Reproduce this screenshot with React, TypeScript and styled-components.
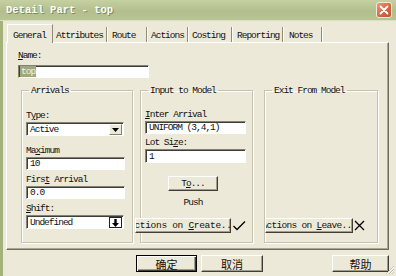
import React from 'react';
import styled, { createGlobalStyle, css } from 'styled-components';

const Global = createGlobalStyle`
  html, body { margin: 0; padding: 0; background: #ece9d8; }
  body { width: 396px; height: 276px; overflow: hidden; }
`;

const mono = `"Liberation Mono", "Courier New", monospace`;
const cjk = `"Noto Sans CJK SC", "Noto Sans", sans-serif`;

const Window = styled.div`
  position: relative;
  width: 396px;
  height: 276px;
  display: flex;
  flex-direction: column;
  background: #ece9d8;
  overflow: hidden;
  font-family: ${mono};
  font-size: 9.5px;
  letter-spacing: -1px;
  color: #111;
`;

const TitleBar = styled.div`
  height: 21px;
  flex: none;
  display: flex;
  align-items: center;
  justify-content: space-between;
  padding: 0 4px 0 6px;
  box-sizing: border-box;
  background: linear-gradient(#c6d0a2, #b2bf8d 55%, #b8c493);
  border-bottom: 1px solid #d9dfc4;
`;

const Title = styled.span`
  font-family: ${mono};
  font-weight: bold;
  font-size: 10.5px;
  letter-spacing: 0;
  color: #fbfcf6;
  text-shadow: 1px 1px 0 #7f8a63;
`;

const CloseBox = styled.div`
  width: 16px;
  height: 16px;
  box-sizing: border-box;
  border: 1px solid #f3e8df;
  border-radius: 3px;
  background: linear-gradient(135deg, #e99a7a, #d2643f 60%, #c4542f);
  display: flex;
  align-items: center;
  justify-content: center;
`;

const Body = styled.div`
  flex: 1;
  display: flex;
  flex-direction: column;
  border-left: 3px solid #a3b27b;
  padding: 3px 0 0 3px;
`;

const TabStrip = styled.div`
  display: flex;
  align-items: flex-end;
  height: 18px;
  padding-left: 1px;
`;

const Tab = styled.div<{ $w: number; $pad: number; $active?: boolean }>`
  width: ${p => p.$w}px;
  box-sizing: border-box;
  padding-left: ${p => p.$pad}px;
  line-height: 13px;
  white-space: nowrap;
  ${p =>
    p.$active
      ? css`
          height: 19px;
          margin-bottom: -1px;
          padding-top: 4px;
          border-top: 1px solid #fff;
          border-left: 1px solid #fff;
          border-right: 1px solid #8d8b7c;
          background: #ece9d8;
          position: relative;
          z-index: 1;
        `
      : css`
          height: 15px;
          padding-top: 2px;
          border-right: 1px solid #8d8b7c;
          box-shadow: 1px 0 0 #fff;
        `}
`;

const Panel = styled.div`
  width: 383px;
  height: 208px;
  box-sizing: border-box;
  border: 1px solid;
  border-color: #fff #6f6d62 #6f6d62 #fff;
  box-shadow: inset -1px -1px 0 #a8a593;
  padding: 6px 0 0 11px;
  display: flex;
  flex-direction: column;
`;

const Label = styled.div`
  height: 13px;
  line-height: 13px;
  white-space: nowrap;
`;

const Key = styled.span`
  text-decoration: underline;
`;

const sunken = css`
  box-sizing: border-box;
  background: #fff;
  border: 1px solid;
  border-color: #838174 #fff #fff #838174;
  box-shadow: inset 1px 1px 0 #3e3d38;
`;

const TextBox = styled.div<{ $w: number; $h?: number }>`
  ${sunken};
  width: ${p => p.$w}px;
  height: ${p => p.$h ?? 13}px;
  padding-left: 3px;
  line-height: ${p => (p.$h ?? 13) - 1}px;
  white-space: nowrap;
  overflow: hidden;
`;

const Selected = styled.span`
  background: #9ea87a;
  color: #f3f5ea;
  padding: 0 1px;
`;

const NameBox = styled(TextBox)`
  margin-top: 3px;
  padding-left: 1px;
`;

const GroupRow = styled.div`
  display: flex;
  margin-top: 6px;
  margin-left: 3px;
  height: 159px;
`;

const Group = styled.fieldset<{ $w: number; $gap?: number }>`
  width: ${p => p.$w}px;
  margin: 0 ${p => p.$gap ?? 0}px 0 0;
  padding: 0 4px 9px 4px;
  box-sizing: border-box;
  border: 1px solid #c6c3b1;
  box-shadow: 1px 1px 0 #fff, inset 1px 1px 0 #fff;
  display: flex;
  flex-direction: column;
  min-width: 0;
`;

const Legend = styled.legend`
  padding: 0 2px;
  margin-left: 3px;
  height: 13px;
  line-height: 13px;
`;

const Field = styled.div<{ $top?: number; $gap?: number }>`
  display: flex;
  flex-direction: column;
  margin-top: ${p => p.$top ?? 0}px;
  margin-bottom: ${p => p.$gap ?? 3}px;
`;

const SelectBox = styled.div<{ $w: number }>`
  ${sunken};
  width: ${p => p.$w}px;
  height: 14px;
  display: flex;
  padding: 1px 1px 1px 0;
`;

const SelectText = styled.span`
  flex: 1;
  padding-left: 3px;
  line-height: 12px;
  white-space: nowrap;
`;

const DropButton = styled.span<{ $kind: 'combo' | 'arrow' }>`
  width: 13px;
  height: 11px;
  box-sizing: border-box;
  display: flex;
  align-items: center;
  justify-content: center;
  ${p =>
    p.$kind === 'combo'
      ? css`
          background: #ece9d8;
          border: 1px solid;
          border-color: #fff #808080 #808080 #fff;
        `
      : css`
          background: #fff;
          border: 1px solid #222;
        `}
`;

const CenterStack = styled.div`
  display: flex;
  flex-direction: column;
  align-items: center;
  margin-top: 13px;
  padding-right: 7px;
`;

const Raised = styled.button`
  box-sizing: border-box;
  margin: 0;
  padding: 0;
  background: #ece9d8;
  border: 1px solid;
  border-color: #fff #3f3e38 #3f3e38 #fff;
  box-shadow: inset -1px -1px 0 #a09d8c;
  font-family: ${mono};
  font-size: 9.5px;
  letter-spacing: -1px;
  color: #111;
  white-space: nowrap;
  overflow: hidden;
  display: flex;
  align-items: center;
  justify-content: center;
`;

const SmallButton = styled(Raised)<{ $w: number }>`
  width: ${p => p.$w}px;
  height: 15px;
  line-height: 13px;
`;

const PushText = styled.div`
  margin-top: 5px;
  height: 13px;
  line-height: 13px;
`;

const ActionRow = styled.div<{ $shift: number }>`
  margin-top: auto;
  margin-left: ${p => p.$shift}px;
  display: flex;
  align-items: center;
  gap: 1px;
`;

const ClipText = styled.span<{ $spacing: number }>`
  flex: none;
  letter-spacing: ${p => p.$spacing}px;
`;

const ButtonRow = styled.div`
  display: flex;
  width: 383px;
  margin-top: 5px;
  padding-left: 130px;
  box-sizing: border-box;
  gap: 4px;
`;

const DialogButton = styled(Raised)<{ $w: number; $default?: boolean; $push?: boolean }>`
  width: ${p => p.$w}px;
  height: 17px;
  font-family: ${cjk};
  font-size: 11px;
  letter-spacing: 0;
  margin-left: ${p => (p.$push ? 'auto' : '0')};
  ${p =>
    p.$default &&
    css`
      border: 1px solid #000;
      box-shadow: inset 1px 1px 0 #fff, inset -1px -1px 0 #3f3e38, inset -2px -2px 0 #a09d8c;
    `}
`;

const Grip = styled.svg`
  position: absolute;
  right: 1px;
  bottom: 1px;
`;

const tabs: { label: string; w: number; pad: number }[] = [
  { label: 'General', w: 46, pad: 5 },
  { label: 'Attributes', w: 54, pad: 3 },
  { label: 'Route', w: 40, pad: 5 },
  { label: 'Actions', w: 41, pad: 4 },
  { label: 'Costing', w: 44, pad: 4 },
  { label: 'Reporting', w: 51, pad: 5 },
  { label: 'Notes', w: 39, pad: 6 },
];

const Check = () => (
  <svg width="14" height="11" viewBox="0 0 14 11">
    <polyline points="1.5,6 5,9.5 13,1.5" fill="none" stroke="#000" strokeWidth="1.3" />
  </svg>
);

const Cross = () => (
  <svg width="11" height="11" viewBox="0 0 11 11">
    <path d="M1 1 L10 10 M10 1 L1 10" stroke="#000" strokeWidth="1.3" />
  </svg>
);

export default function App() {
  return (
    <>
      <Global />
      <Window>
        <TitleBar>
          <Title>Detail Part - top</Title>
          <CloseBox>
            <svg width="10" height="10" viewBox="0 0 10 10">
              <path d="M1.5 1.5 L8.5 8.5 M8.5 1.5 L1.5 8.5" stroke="#fff" strokeWidth="1.8" strokeLinecap="round" />
            </svg>
          </CloseBox>
        </TitleBar>
        <Body>
          <TabStrip>
            {tabs.map((t, i) => (
              <Tab key={t.label} $w={t.w} $pad={t.pad} $active={i === 0}>
                {t.label}
              </Tab>
            ))}
          </TabStrip>
          <Panel>
            <Label>
              <Key>N</Key>ame:
            </Label>
            <NameBox $w={131}>
              <Selected>top</Selected>
            </NameBox>
            <GroupRow>
              <Group $w={112} $gap={7}>
                <Legend>Arrivals</Legend>
                <Field $top={12} $gap={8}>
                  <Label>
                    T<Key>y</Key>pe:
                  </Label>
                  <SelectBox $w={98}>
                    <SelectText>Active</SelectText>
                    <DropButton $kind="combo">
                      <svg width="7" height="4" viewBox="0 0 7 4">
                        <polygon points="0,0 7,0 3.5,4" fill="#000" />
                      </svg>
                    </DropButton>
                  </SelectBox>
                </Field>
                <Field>
                  <Label>
                    Ma<Key>x</Key>imum
                  </Label>
                  <TextBox $w={99}>10</TextBox>
                </Field>
                <Field>
                  <Label>
                    Firs<Key>t</Key> Arrival
                  </Label>
                  <TextBox $w={99}>0.0</TextBox>
                </Field>
                <Field>
                  <Label>
                    <Key>S</Key>hift:
                  </Label>
                  <SelectBox $w={98}>
                    <SelectText>Undefined</SelectText>
                    <DropButton $kind="arrow">
                      <svg width="7" height="8" viewBox="0 0 7 8">
                        <path d="M2.3 0 H4.7 V4 H7 L3.5 8 L0 4 H2.3 Z" fill="#000" />
                      </svg>
                    </DropButton>
                  </SelectBox>
                </Field>
              </Group>
              <Group $w={113} $gap={11}>
                <Legend>Input to Model</Legend>
                <Field $top={11} $gap={2}>
                  <Label>
                    <Key>I</Key>nter Arrival
                  </Label>
                  <TextBox $w={101}>UNIFORM (3,4,1)</TextBox>
                </Field>
                <Field $gap={0}>
                  <Label>
                    Lot Si<Key>z</Key>e:
                  </Label>
                  <TextBox $w={101} $h={14}>1</TextBox>
                </Field>
                <CenterStack>
                  <SmallButton $w={50}>
                    T<Key>o</Key>...
                  </SmallButton>
                  <PushText>Push</PushText>
                </CenterStack>
                <ActionRow $shift={-10}>
                  <SmallButton $w={96}>
                    <ClipText $spacing={-0.3}>
                      Actions on <Key>C</Key>reate...
                    </ClipText>
                  </SmallButton>
                  <Check />
                </ActionRow>
              </Group>
              <Group $w={114}>
                <Legend>Exit From Model</Legend>
                <ActionRow $shift={-4}>
                  <SmallButton $w={88}>
                    <ClipText $spacing={-0.7}>
                      Actions on <Key>L</Key>eave...
                    </ClipText>
                  </SmallButton>
                  <Cross />
                </ActionRow>
              </Group>
            </GroupRow>
          </Panel>
          <ButtonRow>
            <DialogButton $w={61} $default>
              确定
            </DialogButton>
            <DialogButton $w={62}>取消</DialogButton>
            <DialogButton $w={57} $push>
              帮助
            </DialogButton>
          </ButtonRow>
        </Body>
        <Grip width="11" height="11" viewBox="0 0 11 11">
          <path d="M10 2 L2 10 M10 5 L5 10 M10 8 L8 10" stroke="#c4c1b0" strokeWidth="1" />
          <path d="M10 3 L3 10 M10 6 L6 10 M10 9 L9 10" stroke="#fff" strokeWidth="1" />
        </Grip>
      </Window>
    </>
  );
}
